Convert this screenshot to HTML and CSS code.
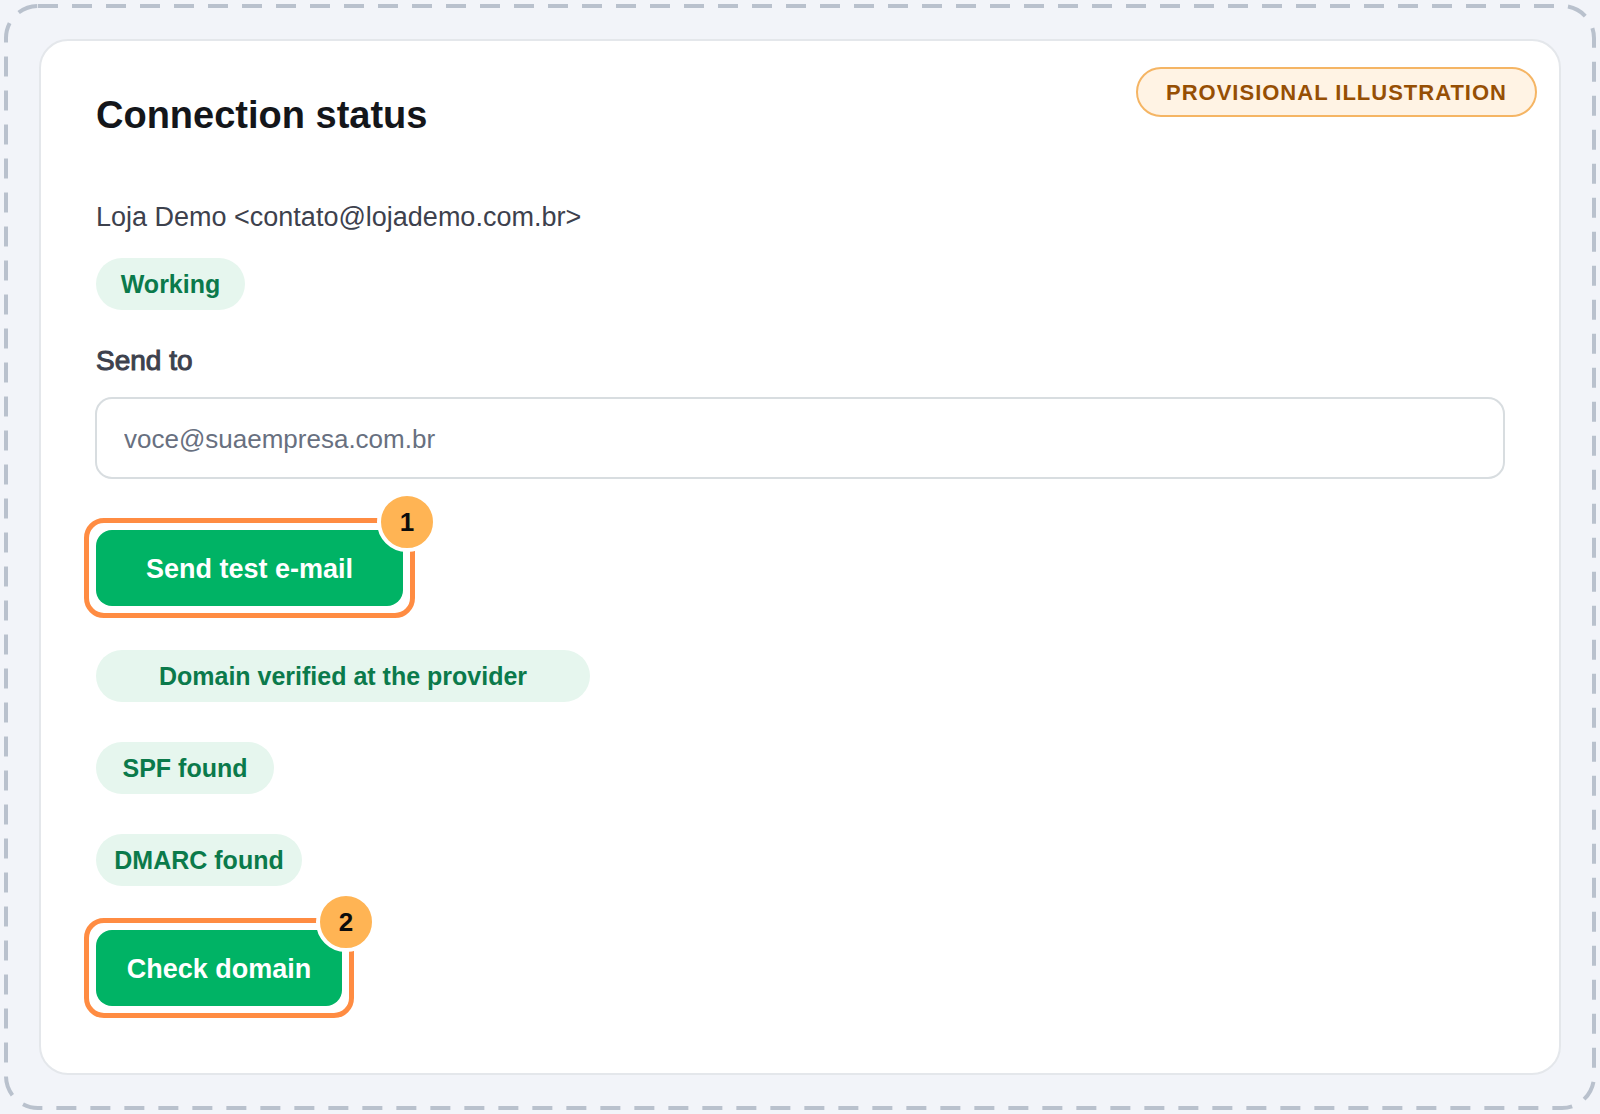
FILE: index.html
```html
<!DOCTYPE html>
<html lang="en">
<head>
<meta charset="utf-8">
<meta name="viewport" content="width=device-width, initial-scale=1">
<title>Connection status</title>
<link rel="stylesheet" href="styles.css">
</head>
<body>
<main class="frame">
  <svg class="frame-outline" aria-hidden="true"><rect class="frame-dash" x="6" y="6" rx="32"/></svg>
  <section class="card">
    <h1 class="title">Connection status</h1>
    <span class="notice">PROVISIONAL ILLUSTRATION</span>
    <p class="sender">Loja Demo &lt;contato@lojademo.com.br&gt;</p>
    <span class="pill pill-state">Working</span>
    <form class="form">
      <label class="label" for="send-to">Send to</label>
      <input class="input" id="send-to" type="email" placeholder="voce@suaempresa.com.br">
      <div class="step">
        <button class="button button-wide" type="button">Send test e-mail</button>
        <span class="step-number">1</span>
      </div>
    </form>
    <ul class="checks">
      <li class="pill pill-domain">Domain verified at the provider</li>
      <li class="pill pill-spf">SPF found</li>
      <li class="pill pill-dmarc">DMARC found</li>
    </ul>
    <div class="step">
      <button class="button" type="button">Check domain</button>
      <span class="step-number">2</span>
    </div>
  </section>
</main>
</body>
</html>
```
FILE: styles.css
```css
* {
  box-sizing: border-box;
}

body {
  margin: 0;
  background: #f2f4f9;
  font-family: "Liberation Sans", Arial, sans-serif;
  color: #3d414d;
}

.frame {
  position: relative;
  min-height: 100vh;
  padding: 39px;
}

.frame-outline {
  position: absolute;
  inset: 0;
  width: 100%;
  height: 100%;
  pointer-events: none;
}

.frame-dash {
  width: calc(100% - 12px);
  height: calc(100% - 12px);
  fill: none;
  stroke: #b9c1cd;
  stroke-width: 4;
  stroke-dasharray: 20 14;
}

.card {
  position: relative;
  display: flex;
  flex-direction: column;
  align-items: flex-start;
  padding: 50px 55px 67px;
  border: 2px solid #e4e7eb;
  border-radius: 29px;
  background: #fff;
}

.title {
  margin: 0;
  font-size: 38px;
  line-height: 48px;
  font-weight: 700;
  color: #14161a;
}

.notice {
  position: absolute;
  top: 26px;
  right: 22px;
  height: 50px;
  padding: 0 28px;
  border: 2px solid #f5b564;
  border-radius: 25px;
  background: #fff3e4;
  color: #964f04;
  font-size: 22px;
  line-height: 48px;
  font-weight: 700;
  letter-spacing: 1px;
}

.sender {
  margin: 62px 0 25px;
  font-size: 27px;
  line-height: 32px;
}

.pill {
  height: 52px;
  border-radius: 26px;
  background: #e6f6ee;
  color: #0b7a4b;
  font-size: 25px;
  line-height: 52px;
  font-weight: 700;
  text-align: center;
}

.pill-state {
  min-width: 149px;
}

.pill-domain {
  min-width: 494px;
}

.pill-spf {
  min-width: 178px;
}

.pill-dmarc {
  min-width: 206px;
}

.form {
  display: flex;
  flex-direction: column;
  align-items: flex-start;
  align-self: stretch;
  margin-top: 35px;
}

.label {
  font-size: 28px;
  line-height: 32px;
  -webkit-text-stroke: 1px #3d414d;
}

.input {
  align-self: stretch;
  height: 82px;
  margin: 20px -1px 51px;
  padding: 2px 27px 0;
  border: 2px solid #d8dde0;
  border-radius: 17px;
  background: #fff;
  font-family: inherit;
  font-size: 26px;
  color: #3d414d;
}

.input::placeholder {
  color: #687080;
  opacity: 1;
}

.step {
  position: relative;
}

.step::before {
  content: "";
  position: absolute;
  inset: -12px;
  border: 5px solid #ff8c42;
  border-radius: 20px;
}

.button {
  position: relative;
  display: block;
  min-width: 246px;
  height: 76px;
  padding: 2px 24px 0;
  border: 0;
  border-radius: 16px;
  background: #00b365;
  color: #fff;
  font-family: inherit;
  font-size: 27px;
  font-weight: 700;
}

.button-wide {
  min-width: 307px;
}

.step-number {
  position: absolute;
  top: -38px;
  right: -34px;
  width: 60px;
  height: 60px;
  border: 4px solid #fff;
  border-radius: 50%;
  background: #ffb454;
  color: #0c0c0c;
  font-size: 26px;
  line-height: 52px;
  font-weight: 700;
  text-align: center;
}

.checks {
  display: flex;
  flex-direction: column;
  align-items: flex-start;
  gap: 40px;
  margin: 44px 0;
  padding: 0;
  list-style: none;
}
```
